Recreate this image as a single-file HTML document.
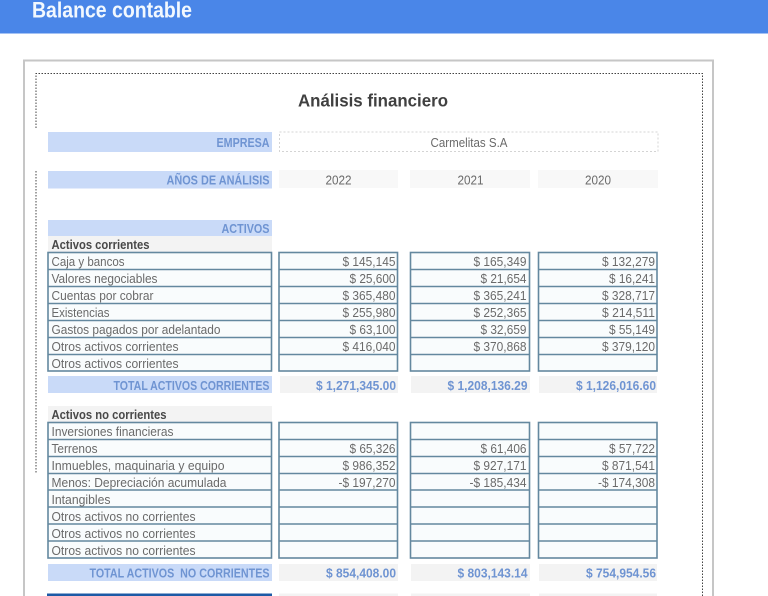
<!DOCTYPE html>
<html lang="es"><head><meta charset="utf-8"><title>Balance contable</title>
<style>
html,body{margin:0;padding:0;background:#fff;width:768px;height:596px;overflow:hidden}
svg{display:block;position:absolute;left:0;top:0;filter:blur(.3px)}
text{font-family:"Liberation Sans",sans-serif}
.l{font-size:12.800px;fill:#6a6a6a}
.v{font-size:12.800px;fill:#6a6a6a;text-anchor:end}
.h{font-size:12.800px;font-weight:bold;fill:#484848}
.b{font-size:12.800px;font-weight:bold;fill:#6f94d2;text-anchor:end}
.c{font-size:12.800px;fill:#6a6a6a}
.box{fill:#f9fcfd;stroke:#64889f;stroke-width:1.600}
</style></head><body>
<svg width="768" height="596" viewBox="0 0 768 596">
<rect width="768" height="33.500" fill="#4a86e8"/>
<text x="32" y="17.500" font-size="22" font-weight="bold" fill="#f2f8fe" textLength="160" lengthAdjust="spacingAndGlyphs">Balance contable</text>

<path d="M24 596V60.500H713V596" fill="none" stroke="#c6c6c6" stroke-width="2"/>
<path d="M36 128V73.500H702.500V596M36 171V473" fill="none" stroke="#444" stroke-width="1" stroke-dasharray="1.500 1.500"/>

<text x="298" y="106.500" font-size="17.500" font-weight="bold" fill="#404040" textLength="150" lengthAdjust="spacingAndGlyphs">Análisis financiero</text>

<rect x="48" y="132" width="224" height="20" fill="#c9daf8"/>
<text class="b" x="269.500" y="147" textLength="53" lengthAdjust="spacingAndGlyphs">EMPRESA</text>
<rect x="279.500" y="132" width="378.500" height="19.500" fill="#fff" stroke="#d4d4d4" stroke-width="1" stroke-dasharray="2 2"/>
<text class="c" x="430.500" y="147" textLength="77" lengthAdjust="spacingAndGlyphs">Carmelitas S.A</text>

<rect x="48" y="171" width="224" height="17.500" fill="#c9daf8"/>
<text class="b" x="269.500" y="184.500" textLength="103" lengthAdjust="spacingAndGlyphs">AÑOS DE ANÁLISIS</text>
<rect x="279" y="170" width="119" height="18" fill="#f8f8f8"/>
<rect x="410" y="170" width="120" height="18" fill="#f8f8f8"/>
<rect x="538" y="170" width="120" height="18" fill="#f8f8f8"/>
<text class="c" x="325.500" y="184.500" textLength="26" lengthAdjust="spacingAndGlyphs">2022</text>
<text class="c" x="457.500" y="184.500" textLength="26" lengthAdjust="spacingAndGlyphs">2021</text>
<text class="c" x="585" y="184.500" textLength="26" lengthAdjust="spacingAndGlyphs">2020</text>

<rect x="48" y="220" width="224" height="16" fill="#c9daf8"/>
<text class="b" x="269.500" y="233" textLength="48" lengthAdjust="spacingAndGlyphs">ACTIVOS</text>
<rect x="48" y="236" width="224" height="16" fill="#f3f3f3"/>
<text class="h" x="51.500" y="249" textLength="98" lengthAdjust="spacingAndGlyphs">Activos corrientes</text>

<rect class="box" x="48" y="252.500" width="223.500" height="118.500"/>
<rect class="box" x="279" y="252.500" width="118.500" height="118.500"/>
<rect class="box" x="410.500" y="252.500" width="119" height="118.500"/>
<rect class="box" x="538.500" y="252.500" width="118.500" height="118.500"/>
<path d="M48 269.500H271.500M48 286.500H271.500M48 303.500H271.500M48 320.500H271.500M48 337.500H271.500M48 354.500H271.500M279 269.500H397.500M279 286.500H397.500M279 303.500H397.500M279 320.500H397.500M279 337.500H397.500M279 354.500H397.500M410.500 269.500H529.500M410.500 286.500H529.500M410.500 303.500H529.500M410.500 320.500H529.500M410.500 337.500H529.500M410.500 354.500H529.500M538.500 269.500H657M538.500 286.500H657M538.500 303.500H657M538.500 320.500H657M538.500 337.500H657M538.500 354.500H657" stroke="#64889f" stroke-width="1.500" fill="none"/>

<text class="l" x="51.500" y="266" textLength="73" lengthAdjust="spacingAndGlyphs">Caja y bancos</text>
<text class="l" x="51.500" y="283" textLength="106" lengthAdjust="spacingAndGlyphs">Valores negociables</text>
<text class="l" x="51.500" y="300" textLength="102" lengthAdjust="spacingAndGlyphs">Cuentas por cobrar</text>
<text class="l" x="51.500" y="317" textLength="58" lengthAdjust="spacingAndGlyphs">Existencias</text>
<text class="l" x="51.500" y="334" textLength="169" lengthAdjust="spacingAndGlyphs">Gastos pagados por adelantado</text>
<text class="l" x="51.500" y="351" textLength="127" lengthAdjust="spacingAndGlyphs">Otros activos corrientes</text>
<text class="l" x="51.500" y="368" textLength="127" lengthAdjust="spacingAndGlyphs">Otros activos corrientes</text>

<text class="v" x="395.500" y="266" textLength="53" lengthAdjust="spacingAndGlyphs">$ 145,145</text>
<text class="v" x="395.500" y="283" textLength="46" lengthAdjust="spacingAndGlyphs">$ 25,600</text>
<text class="v" x="395.500" y="300" textLength="53" lengthAdjust="spacingAndGlyphs">$ 365,480</text>
<text class="v" x="395.500" y="317" textLength="53" lengthAdjust="spacingAndGlyphs">$ 255,980</text>
<text class="v" x="395.500" y="334" textLength="46" lengthAdjust="spacingAndGlyphs">$ 63,100</text>
<text class="v" x="395.500" y="351" textLength="53" lengthAdjust="spacingAndGlyphs">$ 416,040</text>

<text class="v" x="526.500" y="266" textLength="53" lengthAdjust="spacingAndGlyphs">$ 165,349</text>
<text class="v" x="526.500" y="283" textLength="46" lengthAdjust="spacingAndGlyphs">$ 21,654</text>
<text class="v" x="526.500" y="300" textLength="53" lengthAdjust="spacingAndGlyphs">$ 365,241</text>
<text class="v" x="526.500" y="317" textLength="53" lengthAdjust="spacingAndGlyphs">$ 252,365</text>
<text class="v" x="526.500" y="334" textLength="46" lengthAdjust="spacingAndGlyphs">$ 32,659</text>
<text class="v" x="526.500" y="351" textLength="53" lengthAdjust="spacingAndGlyphs">$ 370,868</text>

<text class="v" x="655" y="266" textLength="53" lengthAdjust="spacingAndGlyphs">$ 132,279</text>
<text class="v" x="655" y="283" textLength="46" lengthAdjust="spacingAndGlyphs">$ 16,241</text>
<text class="v" x="655" y="300" textLength="53" lengthAdjust="spacingAndGlyphs">$ 328,717</text>
<text class="v" x="655" y="317" textLength="53" lengthAdjust="spacingAndGlyphs">$ 214,511</text>
<text class="v" x="655" y="334" textLength="46" lengthAdjust="spacingAndGlyphs">$ 55,149</text>
<text class="v" x="655" y="351" textLength="53" lengthAdjust="spacingAndGlyphs">$ 379,120</text>

<rect x="48" y="376" width="224" height="17" fill="#c9daf8"/>
<rect x="280" y="376" width="118" height="17" fill="#f3f3f3"/>
<rect x="411" y="376" width="119" height="17" fill="#f3f3f3"/>
<rect x="539" y="376" width="118" height="17" fill="#f3f3f3"/>
<text class="b" x="269.500" y="390" textLength="156" lengthAdjust="spacingAndGlyphs">TOTAL ACTIVOS CORRIENTES</text>
<text class="b" x="396" y="390" textLength="80" lengthAdjust="spacingAndGlyphs">$ 1,271,345.00</text>
<text class="b" x="527.500" y="390" textLength="80" lengthAdjust="spacingAndGlyphs">$ 1,208,136.29</text>
<text class="b" x="656" y="390" textLength="80" lengthAdjust="spacingAndGlyphs">$ 1,126,016.60</text>

<rect x="48" y="406" width="224" height="16" fill="#f3f3f3"/>
<text class="h" x="51.500" y="419" textLength="115" lengthAdjust="spacingAndGlyphs">Activos no corrientes</text>

<rect class="box" x="48" y="422.500" width="223.500" height="135.500"/>
<rect class="box" x="279" y="422.500" width="118.500" height="135.500"/>
<rect class="box" x="410.500" y="422.500" width="119" height="135.500"/>
<rect class="box" x="538.500" y="422.500" width="118.500" height="135.500"/>
<path d="M48 439.500H271.500M48 456.500H271.500M48 473.500H271.500M48 490H271.500M48 507H271.500M48 524H271.500M48 541H271.500M279 439.500H397.500M279 456.500H397.500M279 473.500H397.500M279 490H397.500M279 507H397.500M279 524H397.500M279 541H397.500M410.500 439.500H529.500M410.500 456.500H529.500M410.500 473.500H529.500M410.500 490H529.500M410.500 507H529.500M410.500 524H529.500M410.500 541H529.500M538.500 439.500H657M538.500 456.500H657M538.500 473.500H657M538.500 490H657M538.500 507H657M538.500 524H657M538.500 541H657" stroke="#64889f" stroke-width="1.500" fill="none"/>

<text class="l" x="51.500" y="436" textLength="122" lengthAdjust="spacingAndGlyphs">Inversiones financieras</text>
<text class="l" x="51.500" y="453" textLength="46" lengthAdjust="spacingAndGlyphs">Terrenos</text>
<text class="l" x="51.500" y="470" textLength="173" lengthAdjust="spacingAndGlyphs">Inmuebles, maquinaria y equipo</text>
<text class="l" x="51.500" y="487" textLength="175" lengthAdjust="spacingAndGlyphs">Menos: Depreciación acumulada</text>
<text class="l" x="51.500" y="504" textLength="59" lengthAdjust="spacingAndGlyphs">Intangibles</text>
<text class="l" x="51.500" y="521" textLength="144" lengthAdjust="spacingAndGlyphs">Otros activos no corrientes</text>
<text class="l" x="51.500" y="538" textLength="144" lengthAdjust="spacingAndGlyphs">Otros activos no corrientes</text>
<text class="l" x="51.500" y="555" textLength="144" lengthAdjust="spacingAndGlyphs">Otros activos no corrientes</text>

<text class="v" x="395.500" y="453" textLength="46" lengthAdjust="spacingAndGlyphs">$ 65,326</text>
<text class="v" x="395.500" y="470" textLength="53" lengthAdjust="spacingAndGlyphs">$ 986,352</text>
<text class="v" x="395.500" y="487" textLength="57" lengthAdjust="spacingAndGlyphs">-$ 197,270</text>
<text class="v" x="526.500" y="453" textLength="46" lengthAdjust="spacingAndGlyphs">$ 61,406</text>
<text class="v" x="526.500" y="470" textLength="53" lengthAdjust="spacingAndGlyphs">$ 927,171</text>
<text class="v" x="526.500" y="487" textLength="57" lengthAdjust="spacingAndGlyphs">-$ 185,434</text>
<text class="v" x="655" y="453" textLength="46" lengthAdjust="spacingAndGlyphs">$ 57,722</text>
<text class="v" x="655" y="470" textLength="53" lengthAdjust="spacingAndGlyphs">$ 871,541</text>
<text class="v" x="655" y="487" textLength="57" lengthAdjust="spacingAndGlyphs">-$ 174,308</text>

<rect x="48" y="564" width="224" height="17" fill="#c9daf8"/>
<rect x="279" y="564" width="119" height="17" fill="#f3f3f3"/>
<rect x="411" y="564" width="119" height="17" fill="#f3f3f3"/>
<rect x="539" y="564" width="118" height="17" fill="#f3f3f3"/>
<text class="b" x="269.500" y="577.500" textLength="180" lengthAdjust="spacingAndGlyphs" xml:space="preserve">TOTAL ACTIVOS  NO CORRIENTES</text>
<text class="b" x="396" y="577.500" textLength="70" lengthAdjust="spacingAndGlyphs">$ 854,408.00</text>
<text class="b" x="527.500" y="577.500" textLength="70" lengthAdjust="spacingAndGlyphs">$ 803,143.14</text>
<text class="b" x="656" y="577.500" textLength="70" lengthAdjust="spacingAndGlyphs">$ 754,954.56</text>

<rect x="47" y="593.500" width="225" height="3" fill="#1c5aa6"/>
<rect x="279" y="593.500" width="119" height="3" fill="#f3f3f3"/>
<rect x="411" y="593.500" width="119" height="3" fill="#f3f3f3"/>
<rect x="539" y="593.500" width="118" height="3" fill="#f3f3f3"/>
</svg>
</body></html>
